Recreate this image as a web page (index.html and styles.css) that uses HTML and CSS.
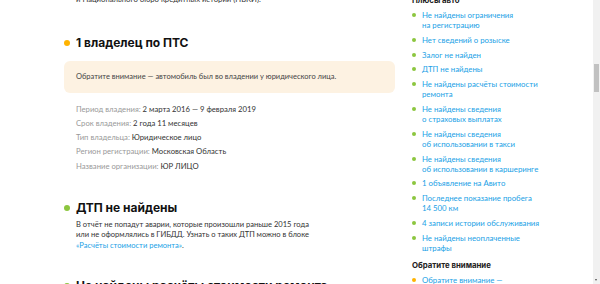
FILE: index.html
```html
<!DOCTYPE html>
<html lang="ru">
<head>
    <meta charset="UTF-8">
    <title>Отчёт по автомобилю</title>
    <link rel="stylesheet" href="styles.css">
</head>
<body>
<div class="page">
    <div class="main">
        <p class="lead">и Национального бюро кредитных истории (НБКИ).</p>

        <div class="section first">
            <h2 class="title"><span class="dot orange"></span>1 владелец по ПТС</h2>
            <div class="notice">Обратите внимание — автомобиль был во владении у юридического лица.</div>
            <ul class="details">
                <li><span class="label">Период владения:</span> 2 марта 2016 — 9 февраля 2019</li>
                <li><span class="label">Срок владения:</span> 2 года 11 месяцев</li>
                <li><span class="label">Тип владельца:</span> Юридическое лицо</li>
                <li><span class="label">Регион регистрации:</span> Московская Область</li>
                <li><span class="label">Название организации:</span> ЮР ЛИЦО</li>
            </ul>
        </div>

        <div class="section">
            <h2 class="title"><span class="dot green"></span>ДТП не найдены</h2>
            <p class="text">В отчёт не попадут аварии, которые произошли раньше 2015 года<br>
                или не оформлялись в ГИБДД. Узнать о таких ДТП можно в блоке<br>
                <a href="#">«Расчёты стоимости ремонта»</a>.</p>
        </div>

        <div class="section">
            <h2 class="title"><span class="dot green"></span>Не найдены расчёты стоимости ремонта</h2>
        </div>
    </div>

    <div class="aside">
        <h3 class="aside-title first">Плюсы авто</h3>
        <ul class="pros">
            <li><a href="#">Не найдены ограничения<br>на регистрацию</a></li>
            <li><a href="#">Нет сведений о розыске</a></li>
            <li><a href="#">Залог не найден</a></li>
            <li><a href="#">ДТП не найдены</a></li>
            <li><a href="#">Не найдены расчёты стоимости<br>ремонта</a></li>
            <li><a href="#">Не найдены сведения<br>о страховых выплатах</a></li>
            <li><a href="#">Не найдены сведения<br>об использовании в такси</a></li>
            <li><a href="#">Не найдены сведения<br>об использовании в каршеринге</a></li>
            <li><a href="#">1 объявление на Авито</a></li>
            <li><a href="#">Последнее показание пробега<br>14 500 км</a></li>
            <li><a href="#">4 записи истории обслуживания</a></li>
            <li><a href="#">Не найдены неоплаченные<br>штрафы</a></li>
        </ul>
        <h3 class="aside-title">Обратите внимание</h3>
        <ul class="pros warn">
            <li><a href="#">Обратите внимание —</a></li>
        </ul>
    </div>
</div>

<div class="scrollbar">
    <div class="thumb"></div>
    <div class="arrow"></div>
</div>
</body>
</html>
```

FILE: styles.css
```css
* {
    margin: 0;
    padding: 0;
    box-sizing: border-box;
}

ul {
    list-style: none;
}

a {
    color: #1a9fe6;
    text-decoration: none;
}

html, body {
    height: 100%;
    overflow: hidden;
}

body {
    background: #fff;
    font-family: Lato, "Open Sans", sans-serif;
    color: #333;
}

.page {
    display: flex;
    align-items: flex-start;
}

.main {
    width: 395px;
    padding-left: 64px;
    margin-top: -6px;
}

.lead {
    padding-left: 12px;
    font-size: 7.7px;
    line-height: 11px;
    color: #333;
}

.section {
    margin-top: 27px;
}

.section.first {
    margin-top: 29.5px;
}

.title {
    display: flex;
    align-items: center;
    font-family: Inter, "Noto Sans", sans-serif;
    font-weight: 700;
    font-size: 12px;
    line-height: 16px;
    color: #111;
}

.dot {
    display: inline-block;
    width: 6px;
    height: 6px;
    border-radius: 50%;
    margin: 0 6px 0 0;
}

.dot.orange {
    background: #ffb300;
}

.dot.green {
    background: #8cc63f;
}

.notice {
    margin-top: 10.5px;
    height: 32px;
    padding: 0 12px;
    border-radius: 6px;
    background: #fdf2e2;
    font-size: 7.5px;
    line-height: 32px;
    color: #444;
}

.details {
    margin-top: 8.5px;
    padding-left: 12px;
    font-size: 7.7px;
    line-height: 14.25px;
    color: #333;
}

.details .label {
    color: #999;
}

.text {
    margin-top: 4px;
    padding-left: 12px;
    font-size: 7.55px;
    line-height: 10.5px;
    color: #333;
}

.aside {
    margin-left: 17px;
    width: 180px;
    margin-top: -6px;
}

.aside-title {
    font-family: Inter, "Noto Sans", sans-serif;
    font-weight: 700;
    font-size: 7.8px;
    line-height: 12px;
    color: #222;
    margin-top: 6px;
}

.aside-title.first {
    margin-top: 0;
}

.pros {
    margin-top: 4px;
}

.pros li {
    position: relative;
    padding-left: 10px;
    margin-bottom: 4.8px;
    font-size: 7.8px;
    line-height: 10px;
}

.pros li::before {
    content: "";
    position: absolute;
    left: 0;
    top: 3px;
    width: 4px;
    height: 4px;
    border-radius: 50%;
    background: #8cc63f;
}

.pros.warn li::before {
    background: #ffb300;
}

.scrollbar {
    position: fixed;
    top: 0;
    right: 0;
    width: 7px;
    height: 284px;
    background: #f1f1f1;
}

.thumb {
    margin: 64px 1px 0 1px;
    height: 28px;
    background: #c1c1c1;
}

.arrow {
    position: absolute;
    left: 2px;
    bottom: 3px;
    width: 0;
    height: 0;
    border-left: 1.5px solid transparent;
    border-right: 1.5px solid transparent;
    border-top: 2px solid #505050;
}
```
